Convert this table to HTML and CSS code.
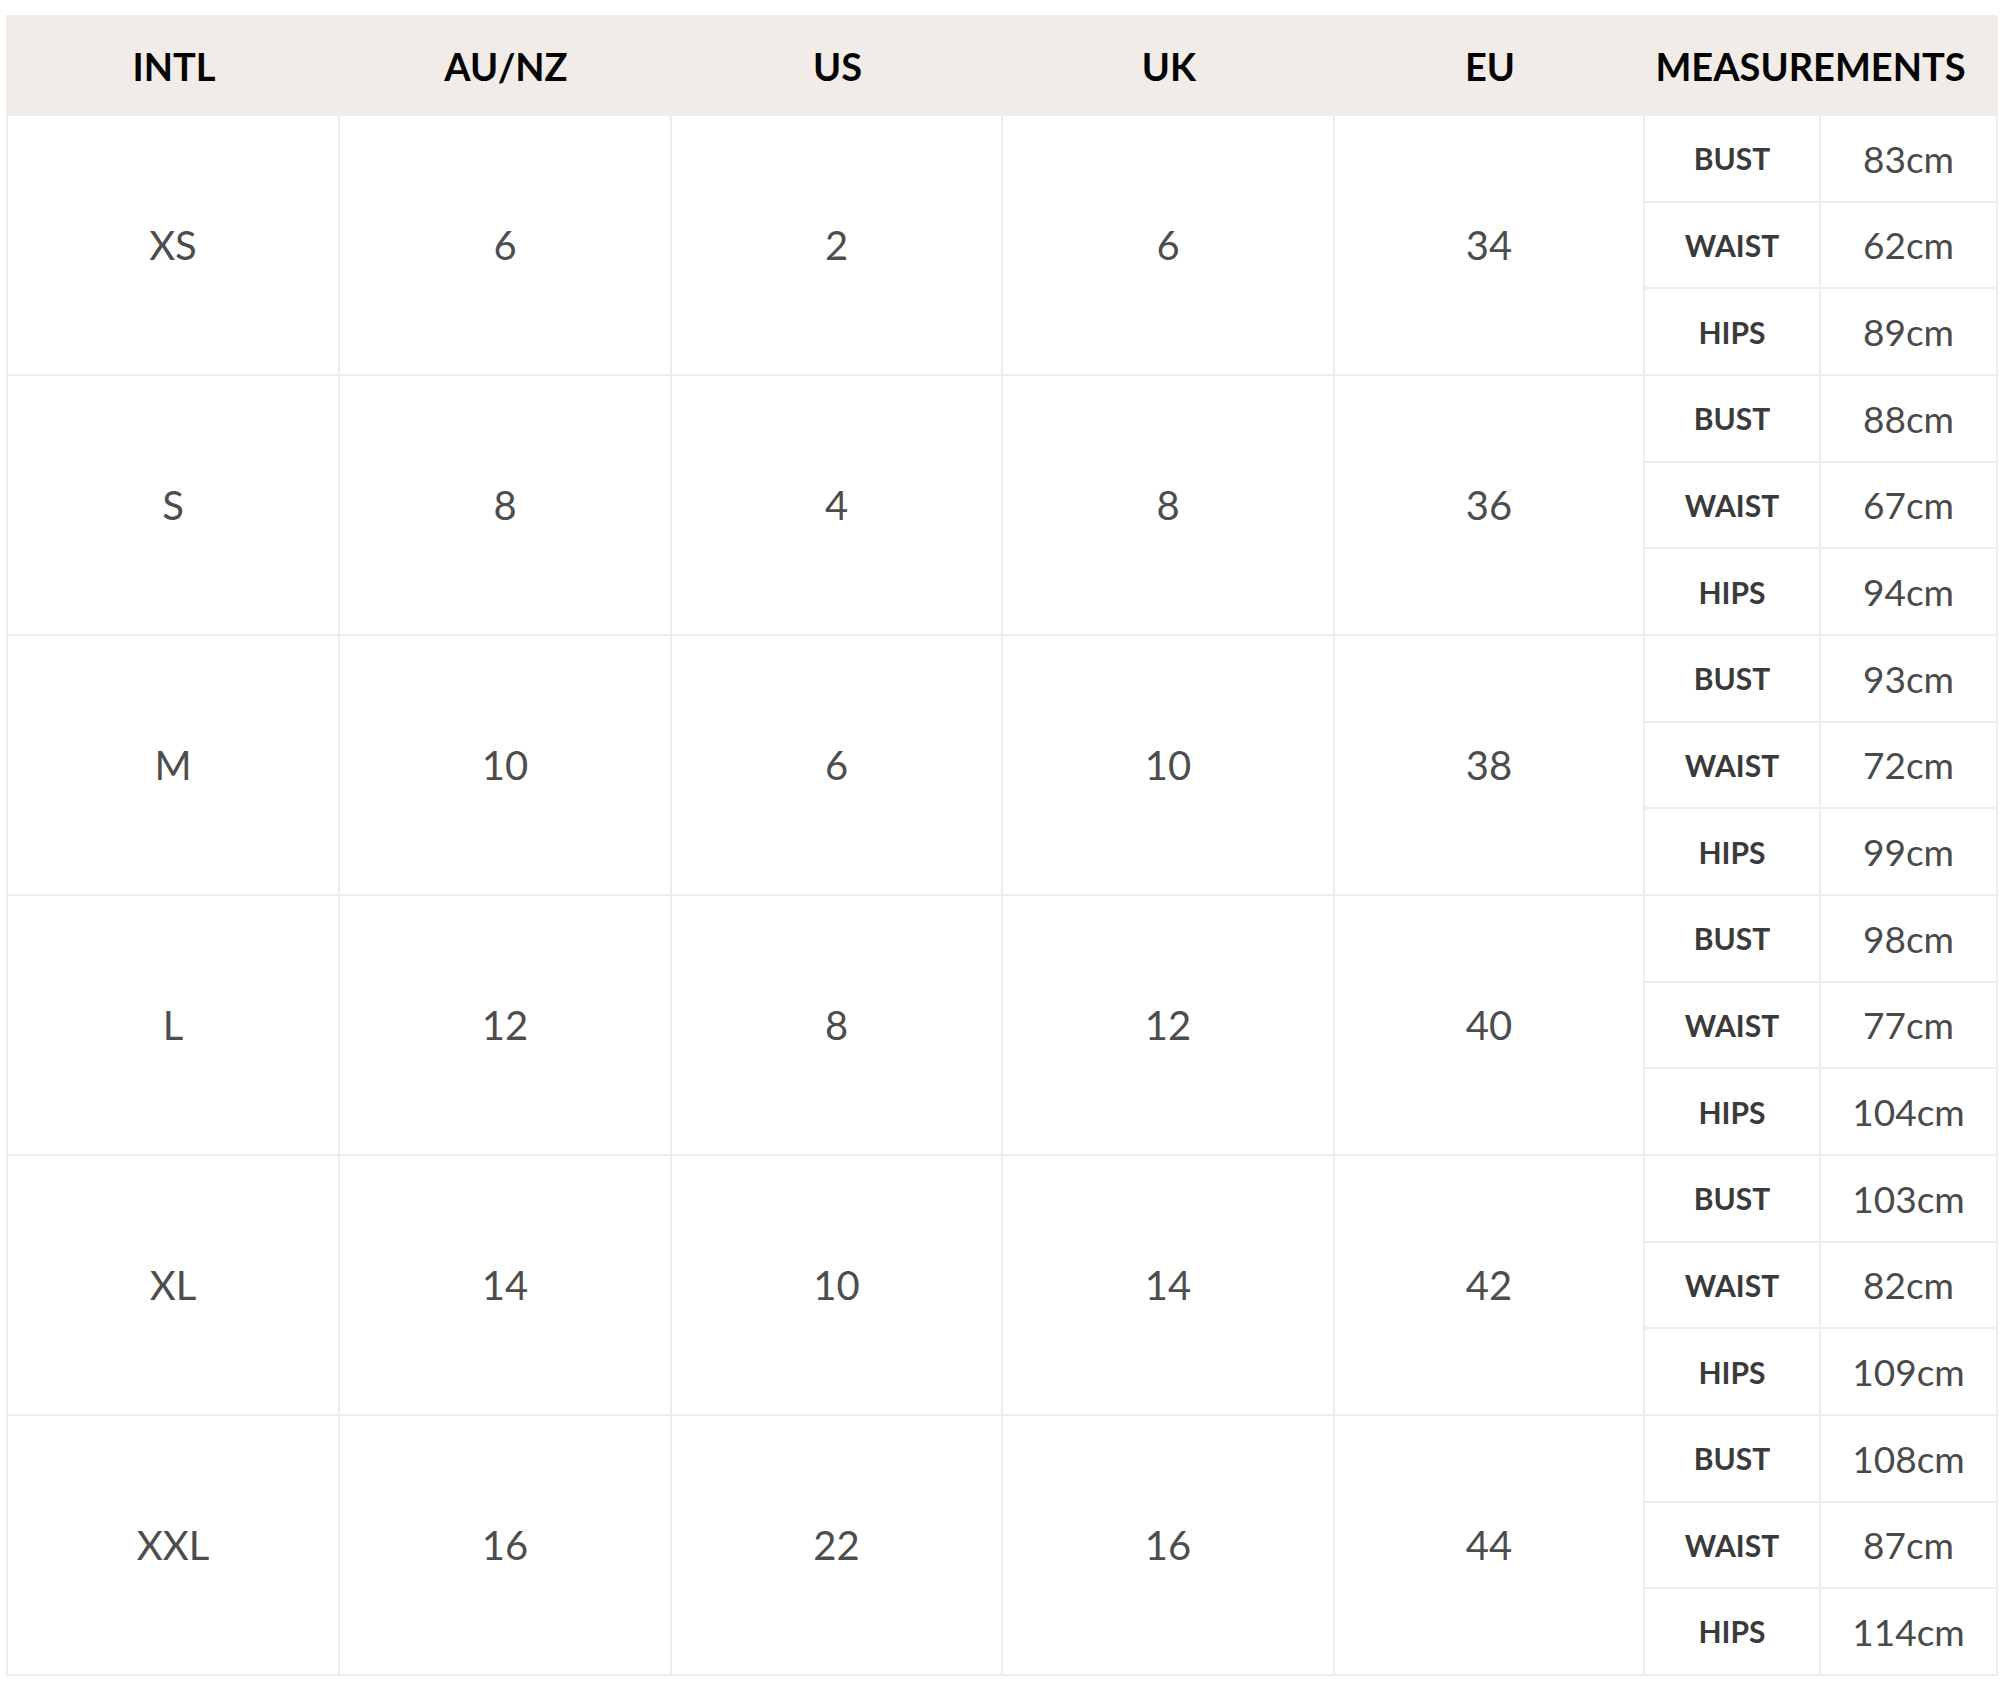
FILE: index.html
```html
<!DOCTYPE html>
<html lang="en">
<head>
<meta charset="utf-8">
<title>Size Chart</title>
<link rel="stylesheet" href="styles.css">
</head>
<body>
<div class="page">
  <div class="chart">
    <div class="th">INTL</div>
    <div class="th">AU/NZ</div>
    <div class="th">US</div>
    <div class="th">UK</div>
    <div class="th">EU</div>
    <div class="th th-meas">MEASUREMENTS</div>

    <div class="cell main">XS</div><div class="cell main">6</div><div class="cell main">2</div><div class="cell main">6</div><div class="cell main">34</div>
    <div class="cell label">BUST</div><div class="cell value">83cm</div>
    <div class="cell label">WAIST</div><div class="cell value">62cm</div>
    <div class="cell label">HIPS</div><div class="cell value">89cm</div>

    <div class="cell main">S</div><div class="cell main">8</div><div class="cell main">4</div><div class="cell main">8</div><div class="cell main">36</div>
    <div class="cell label">BUST</div><div class="cell value">88cm</div>
    <div class="cell label">WAIST</div><div class="cell value">67cm</div>
    <div class="cell label">HIPS</div><div class="cell value">94cm</div>

    <div class="cell main">M</div><div class="cell main">10</div><div class="cell main">6</div><div class="cell main">10</div><div class="cell main">38</div>
    <div class="cell label">BUST</div><div class="cell value">93cm</div>
    <div class="cell label">WAIST</div><div class="cell value">72cm</div>
    <div class="cell label">HIPS</div><div class="cell value">99cm</div>

    <div class="cell main">L</div><div class="cell main">12</div><div class="cell main">8</div><div class="cell main">12</div><div class="cell main">40</div>
    <div class="cell label">BUST</div><div class="cell value">98cm</div>
    <div class="cell label">WAIST</div><div class="cell value">77cm</div>
    <div class="cell label">HIPS</div><div class="cell value">104cm</div>

    <div class="cell main">XL</div><div class="cell main">14</div><div class="cell main">10</div><div class="cell main">14</div><div class="cell main">42</div>
    <div class="cell label">BUST</div><div class="cell value">103cm</div>
    <div class="cell label">WAIST</div><div class="cell value">82cm</div>
    <div class="cell label">HIPS</div><div class="cell value">109cm</div>

    <div class="cell main">XXL</div><div class="cell main">16</div><div class="cell main">22</div><div class="cell main">16</div><div class="cell main">44</div>
    <div class="cell label">BUST</div><div class="cell value">108cm</div>
    <div class="cell label">WAIST</div><div class="cell value">87cm</div>
    <div class="cell label">HIPS</div><div class="cell value">114cm</div>
  </div>
</div>
</body>
</html>
```
FILE: styles.css
```css
* { box-sizing: border-box; }
html, body { margin: 0; padding: 0; background: #ffffff; }
body { font-family: Lato, "Open Sans", Arial, sans-serif; }

.page {
  padding: 15px 2px 0 6px;
}

.chart {
  display: grid;
  grid-template-columns: 332px 332px 331px 332px 310px 176px 177px;
  grid-template-rows: 101px repeat(18, 86.667px);
  border-left: 2px solid #f1ece8;
  width: 1992px;
}

.th {
  background: #f1ece8;
  color: #050505;
  font-weight: 700;
  font-size: 38px;
  display: flex;
  align-items: center;
  justify-content: center;
}

.th-meas {
  grid-column: span 2;
  padding-right: 22px;
}

.cell {
  display: flex;
  align-items: center;
  justify-content: center;
  border-right: 2px solid #f1ece8;
  border-bottom: 2px solid #f1ece8;
  color: #4d4d4d;
}

.main {
  grid-row: span 3;
  font-size: 40px;
}

.label {
  font-size: 30px;
  font-weight: 700;
  color: #3a3a3a;
}

.value {
  font-size: 37px;
  color: #4a4a4a;
}
```
